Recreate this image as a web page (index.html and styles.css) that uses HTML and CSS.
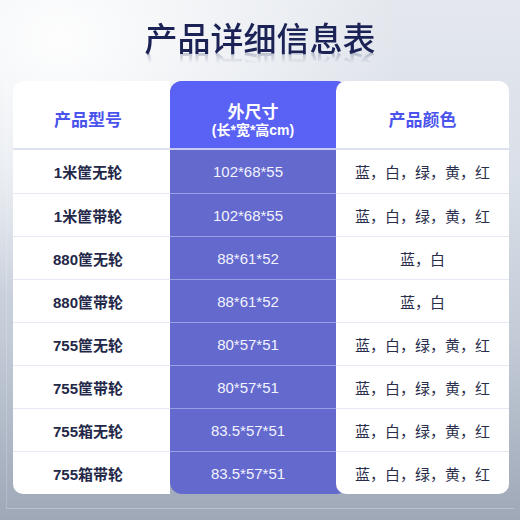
FILE: index.html
```html
<!DOCTYPE html>
<html lang="zh">
<head>
<meta charset="utf-8">
<title>产品详细信息表</title>
<link rel="stylesheet" href="styles.css">
</head>
<body>
<div class="page">
  <h1 class="title">产品详细信息表</h1>
  <div class="panel">
    <div class="table">
      <div class="col col-model">
        <div class="head"><span class="head-text">产品型号</span></div>
        <div class="cell">1米筐无轮</div>
        <div class="cell">1米筐带轮</div>
        <div class="cell">880筐无轮</div>
        <div class="cell">880筐带轮</div>
        <div class="cell">755筐无轮</div>
        <div class="cell">755筐带轮</div>
        <div class="cell">755箱无轮</div>
        <div class="cell">755箱带轮</div>
      </div>
      <div class="col col-size">
        <div class="head">
          <span class="head-text">外尺寸</span>
          <span class="head-sub">(长*宽*高cm)</span>
        </div>
        <div class="cell">102*68*55</div>
        <div class="cell">102*68*55</div>
        <div class="cell">88*61*52</div>
        <div class="cell">88*61*52</div>
        <div class="cell">80*57*51</div>
        <div class="cell">80*57*51</div>
        <div class="cell">83.5*57*51</div>
        <div class="cell">83.5*57*51</div>
      </div>
      <div class="col col-color">
        <div class="head"><span class="head-text">产品颜色</span></div>
        <div class="cell">蓝，白，绿，黄，红</div>
        <div class="cell">蓝，白，绿，黄，红</div>
        <div class="cell">蓝，白</div>
        <div class="cell">蓝，白</div>
        <div class="cell">蓝，白，绿，黄，红</div>
        <div class="cell">蓝，白，绿，黄，红</div>
        <div class="cell">蓝，白，绿，黄，红</div>
        <div class="cell">蓝，白，绿，黄，红</div>
      </div>
    </div>
  </div>
</div>
</body>
</html>
```
FILE: styles.css
```css
html, body {
  margin: 0;
  padding: 0;
}

body {
  font-family: "Liberation Sans", "Noto Sans CJK SC", sans-serif;
}

.page {
  width: 520px;
  height: 520px;
  overflow: hidden;
  background:
    radial-gradient(ellipse 340px 260px at 60px 40px, rgba(255,255,255,0.95), rgba(255,255,255,0) 100%),
    linear-gradient(180deg, #e4e8ee 0%, #d9dfe8 35%, #c3cbd7 65%, #9ea8b7 100%);
}

.title {
  margin: 17px 0 0;
  height: 40px;
  line-height: 40px;
  text-align: center;
  font-family: "Noto Sans CJK SC", sans-serif;
  font-size: 33px;
  font-weight: 500;
  color: #1b2255;
  letter-spacing: 0;
  -webkit-box-reflect: below -9px linear-gradient(transparent 62%, rgba(255,255,255,0.35));
}

.panel {
  margin: 24px 6px 0;
  padding: 0 6px 14px;
  border-left: 1px solid rgba(255,255,255,0.18);
  border-bottom: 1px solid rgba(255,255,255,0.28);
}

.table {
  display: flex;
  width: 496px;
}

.col {
  display: flex;
  flex-direction: column;
}

.head {
  box-sizing: border-box;
  height: 69px;
  padding-top: 12px;
  border-bottom: 2px solid #dde2f1;
  display: flex;
  flex-direction: column;
  align-items: center;
  justify-content: center;
  font-weight: bold;
}

.head-text {
  font-size: 17px;
  line-height: 19px;
}

.head-sub {
  font-size: 14px;
  line-height: 16px;
}

.cell {
  box-sizing: border-box;
  height: 43px;
  display: flex;
  align-items: center;
  justify-content: center;
  font-size: 15px;
  border-top: 1px solid #e6e9f4;
}

.head + .cell {
  border-top: none;
  height: 42px;
  margin-bottom: 1px;
}

.col-model {
  width: 157px;
  background: #ffffff;
  border-radius: 10px 0 0 10px;
  color: #232748;
}

.col-model .head,
.col-model .cell {
  padding-right: 7px;
}

.col-model .head {
  color: #4a53ec;
}

.col-model .cell {
  font-weight: bold;
}

.col-size {
  box-sizing: border-box;
  width: 178px;
  margin-right: -12px;
  background: #6369cd;
  border-radius: 12px;
  color: #f2f3ff;
  overflow: hidden;
}

.col-size .head {
  background: #5a61f5;
  color: #ffffff;
  border-bottom-color: #c9ccf2;
  padding-right: 12px;
}

.col-size .cell {
  border-top-color: #9a9ee2;
  padding-right: 22px;
}

.col-color {
  position: relative;
  z-index: 1;
  width: 173px;
  background: #ffffff;
  border-radius: 10px;
  color: #2a2e4c;
}

.col-color .head {
  color: #4a53ec;
}
```
